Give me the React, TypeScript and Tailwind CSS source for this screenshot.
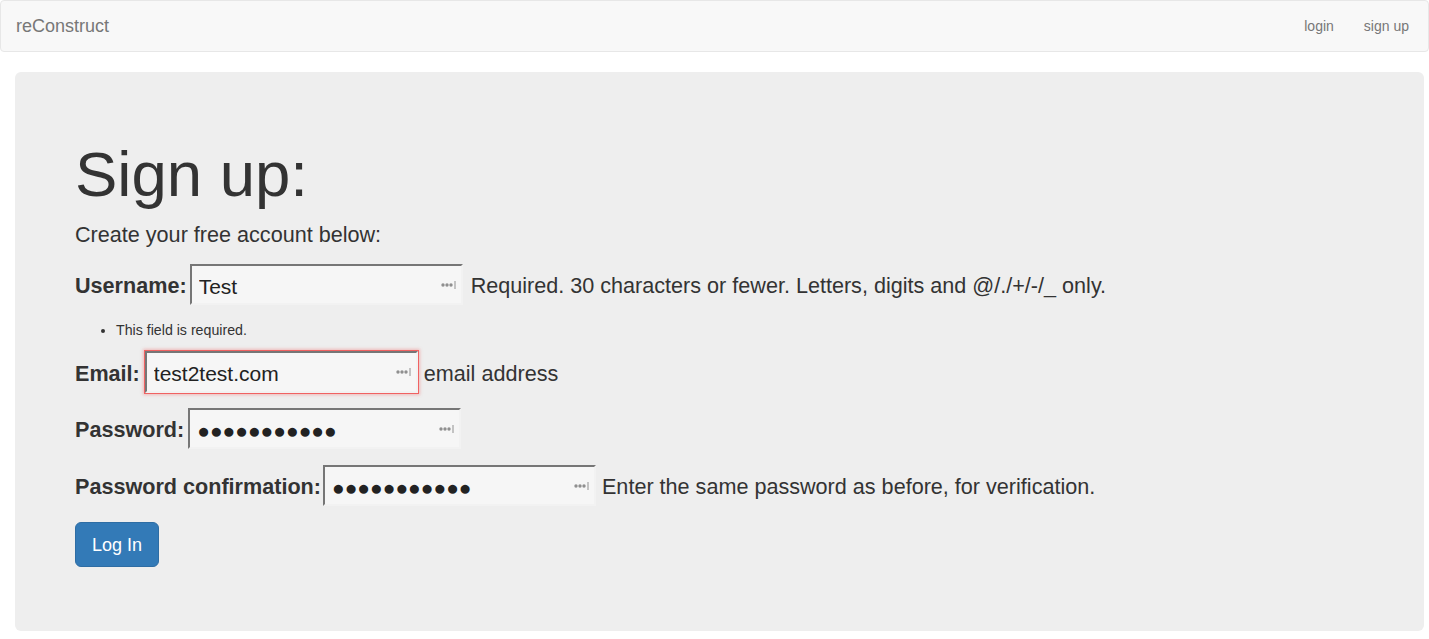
import React from "react";

function PmIcon() {
  return (
    <svg
      className="absolute right-[6px] top-1/2 -translate-y-1/2 pointer-events-none"
      width="16"
      height="8"
      viewBox="0 0 16 8"
    >
      <circle cx="2" cy="4" r="1.7" fill="#8f8f8f" />
      <circle cx="6" cy="4" r="1.7" fill="#8f8f8f" />
      <circle cx="10" cy="4" r="1.7" fill="#8f8f8f" />
      <rect x="13.5" y="0" width="1" height="8" fill="#8f8f8f" />
    </svg>
  );
}

function Field({ value, invalid = false }: { value: string; invalid?: boolean }) {
  const base =
    "w-[273px] bg-[#f6f6f6] text-[21px] text-[#222] pl-[7px] pr-[26px] pt-[4px] outline-none border-2 border-t-[#767676] border-l-[#767676] border-b-[#f2f2f2] border-r-[#f2f2f2] font-['Liberation_Sans','DejaVu_Sans',Arial,sans-serif]";
  return (
    <div className="relative inline-flex">
      <input
        readOnly
        type="text"
        defaultValue={value}
        className={
          invalid
            ? base +
              " h-[42px] shadow-[0_0_0_1px_#f06262,0_0_3px_2px_rgba(240,90,90,0.35)]"
            : base + " h-[41px]"
        }
      />
      <PmIcon />
    </div>
  );
}

const DOTS = "●●●●●●●●●●●";

export default function App() {
  return (
    <div className="min-h-[639px] bg-white font-['Liberation_Sans',Arial,sans-serif] text-[#333]">
      <nav className="h-[52px] bg-[#f8f8f8] border border-[#e7e7e7] rounded-[4px] flex items-center justify-between pl-[15px] pr-[4px]">
        <span className="text-[18px] text-[#777]">reConstruct</span>
        <div className="flex text-[14px] text-[#777]">
          <span className="px-[15px]">login</span>
          <span className="px-[15px]">sign up</span>
        </div>
      </nav>

      <div className="mt-[20px] ml-[15px] mr-[5px] bg-[#eee] rounded-[6px] px-[60px] pt-[48px] pb-[64px]">
        <h1 className="mt-[20px] mb-[10px] text-[63.5px] leading-[69px]">Sign up:</h1>
        <p className="text-[21.6px] leading-[32px] mb-[13px]">Create your free account below:</p>

        <div className="flex flex-col text-[21.6px]">
          <div className="flex items-center h-[41px]">
            <label className="font-bold mr-[3px] pt-[4px]">Username:</label>
            <Field value="Test" />
            <span className="ml-[8px] pt-[4px]">
              Required. 30 characters or fewer. Letters, digits and @/./+/-/_ only.
            </span>
          </div>

          <ul className="mt-[15px] h-[20px] pl-[41px] list-disc text-[14.2px] leading-[20px]">
            <li>This field is required.</li>
          </ul>

          <div className="flex items-center h-[44px] mt-[10px]">
            <label className="font-bold mr-[5px] pt-[4px]">Email:</label>
            <Field value="test2test.com" invalid />
            <span className="ml-[6px] pt-[4px]">email address</span>
          </div>

          <div className="flex items-center h-[41px] mt-[14px]">
            <label className="font-bold mr-[4px] pt-[4px]">Password:</label>
            <Field value={DOTS} />
          </div>

          <div className="flex items-center h-[41px] mt-[16px]">
            <label className="font-bold mr-[2px] pt-[4px]">Password confirmation:</label>
            <Field value={DOTS} />
            <span className="ml-[6px] pt-[4px]">Enter the same password as before, for verification.</span>
          </div>

          <div className="mt-[16px]">
            <button className="h-[45px] px-[16px] bg-[#337ab7] border border-[#2e6da4] rounded-[6px] text-white text-[18px] leading-[24px]">
              Log In
            </button>
          </div>
        </div>
      </div>
    </div>
  );
}
